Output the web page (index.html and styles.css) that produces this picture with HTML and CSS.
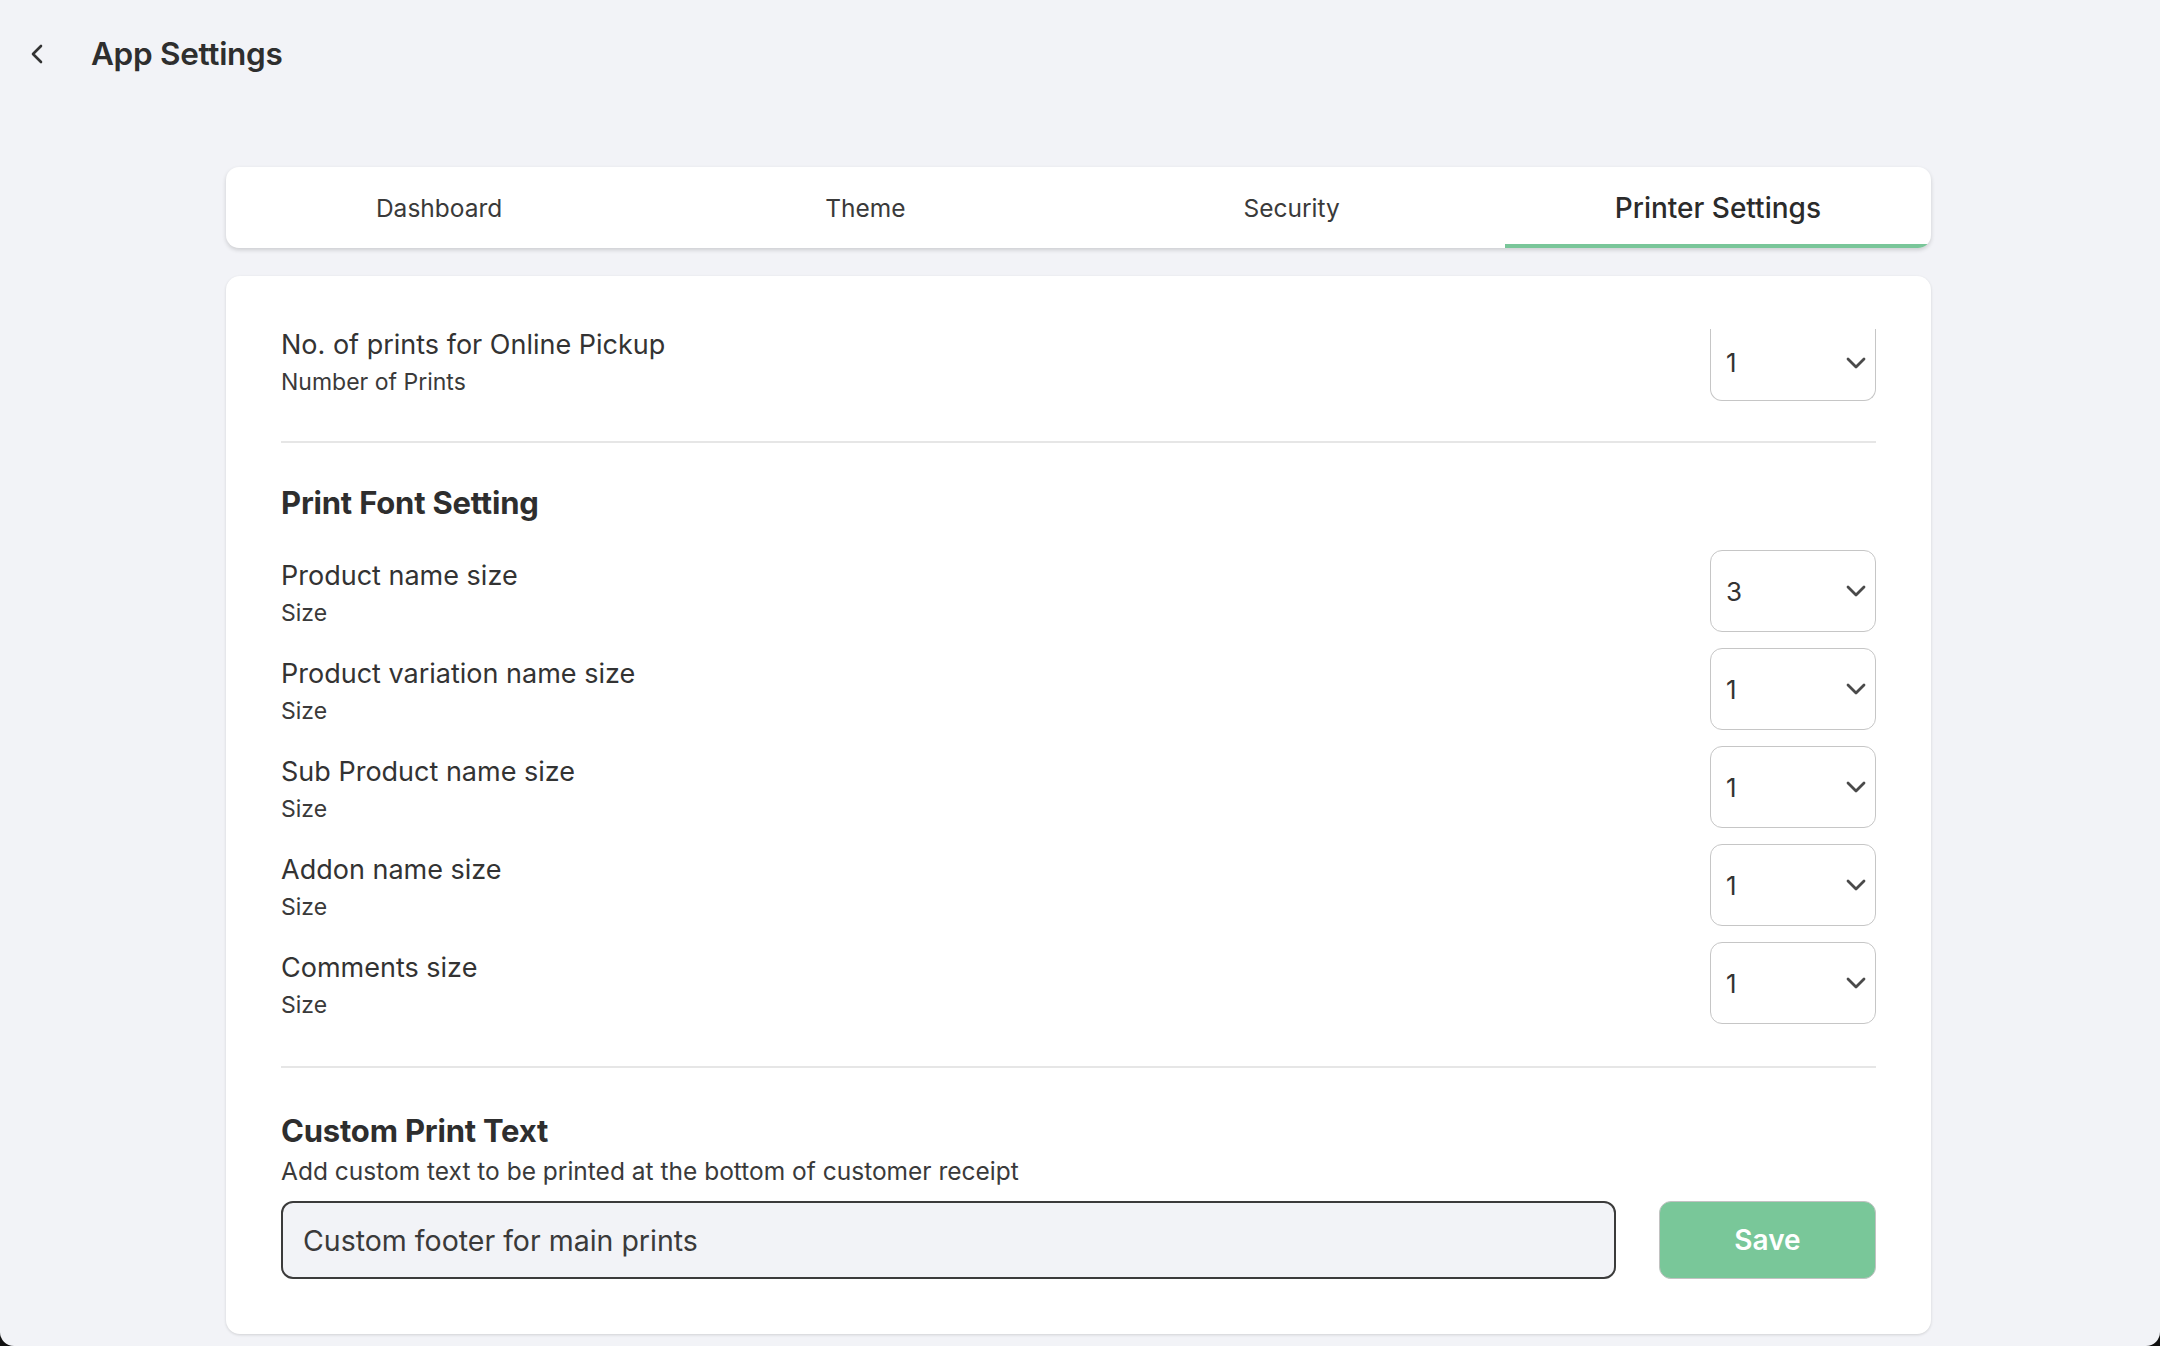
FILE: index.html
```html
<!DOCTYPE html>
<html lang="en">
<head>
<meta charset="utf-8">
<title>App Settings</title>
<link rel="stylesheet" href="styles.css">
</head>
<body>
<header class="topbar">
  <button class="back" aria-label="Back">
    <svg width="14" height="22" viewBox="0 0 14 22"><path d="M11 3 L3 11 L11 19" fill="none" stroke="#333" stroke-width="2.6" stroke-linecap="round" stroke-linejoin="round"/></svg>
  </button>
  <h1 class="title">App Settings</h1>
</header>

<main class="wrap">
  <nav class="tabs">
    <div class="tab">Dashboard</div>
    <div class="tab">Theme</div>
    <div class="tab">Security</div>
    <div class="tab active">Printer Settings</div>
  </nav>

  <section class="card">
    <div class="scroll">
      <div class="scroll-inner">
        <div class="row">
          <div class="label">
            <div class="name">No. of prints for Online Pickup</div>
            <div class="sub">Number of Prints</div>
          </div>
          <div class="select clipped"><span>1</span><svg class="chev" width="20" height="12" viewBox="0 0 20 12"><path d="M2 2 L10 10 L18 2" fill="none" stroke="#4a4a4a" stroke-width="2.8" stroke-linecap="round" stroke-linejoin="round"/></svg></div>
        </div>

        <hr class="divider first">

        <h2 class="heading">Print Font Setting</h2>

        <div class="rows">
          <div class="row">
            <div class="label"><div class="name">Product name size</div><div class="sub">Size</div></div>
            <div class="select"><span>3</span><svg class="chev" width="20" height="12" viewBox="0 0 20 12"><path d="M2 2 L10 10 L18 2" fill="none" stroke="#4a4a4a" stroke-width="2.8" stroke-linecap="round" stroke-linejoin="round"/></svg></div>
          </div>
          <div class="row">
            <div class="label"><div class="name">Product variation name size</div><div class="sub">Size</div></div>
            <div class="select"><span>1</span><svg class="chev" width="20" height="12" viewBox="0 0 20 12"><path d="M2 2 L10 10 L18 2" fill="none" stroke="#4a4a4a" stroke-width="2.8" stroke-linecap="round" stroke-linejoin="round"/></svg></div>
          </div>
          <div class="row">
            <div class="label"><div class="name">Sub Product name size</div><div class="sub">Size</div></div>
            <div class="select"><span>1</span><svg class="chev" width="20" height="12" viewBox="0 0 20 12"><path d="M2 2 L10 10 L18 2" fill="none" stroke="#4a4a4a" stroke-width="2.8" stroke-linecap="round" stroke-linejoin="round"/></svg></div>
          </div>
          <div class="row">
            <div class="label"><div class="name">Addon name size</div><div class="sub">Size</div></div>
            <div class="select"><span>1</span><svg class="chev" width="20" height="12" viewBox="0 0 20 12"><path d="M2 2 L10 10 L18 2" fill="none" stroke="#4a4a4a" stroke-width="2.8" stroke-linecap="round" stroke-linejoin="round"/></svg></div>
          </div>
          <div class="row">
            <div class="label"><div class="name">Comments size</div><div class="sub">Size</div></div>
            <div class="select"><span>1</span><svg class="chev" width="20" height="12" viewBox="0 0 20 12"><path d="M2 2 L10 10 L18 2" fill="none" stroke="#4a4a4a" stroke-width="2.8" stroke-linecap="round" stroke-linejoin="round"/></svg></div>
          </div>
        </div>

        <hr class="divider second">

        <h2 class="heading">Custom Print Text</h2>
        <p class="desc">Add custom text to be printed at the bottom of customer receipt</p>
        <div class="footer-form">
          <div class="input">Custom footer for main prints</div>
          <button class="save">Save</button>
        </div>
      </div>
    </div>
  </section>
</main>

<div class="screen-corners"></div>
</body>
</html>
```

FILE: styles.css
```css
* { box-sizing: border-box; }

html, body {
  margin: 0;
  padding: 0;
  background: #f2f3f7;
  color: #333333;
  font-family: Inter, "Open Sans", "Liberation Sans", sans-serif;
}

body {
  width: 2160px;
  height: 1346px;
  overflow: hidden;
}

.topbar {
  display: flex;
  align-items: center;
  height: 40px;
  margin-top: 34px;
  padding-left: 29px;
}

.back {
  display: flex;
  align-items: center;
  justify-content: center;
  width: 16px;
  height: 24px;
  padding: 0;
  border: 0;
  background: none;
}

.title {
  margin: 0 0 0 46px;
  font-size: 31.5px;
  line-height: 40px;
  font-weight: 600;
  color: #2e2e2e;
  letter-spacing: -0.3px;
}

.wrap {
  width: 1705px;
  margin: 93px 0 0 226px;
}

.tabs {
  display: grid;
  grid-template-columns: repeat(4, 1fr);
  height: 81px;
  background: #ffffff;
  border-radius: 13px;
  box-shadow: 0 2px 4px rgba(0, 0, 0, 0.16);
  overflow: hidden;
}

.tab {
  display: flex;
  align-items: center;
  justify-content: center;
  font-size: 24.5px;
  color: #3a3a3a;
  font-weight: 400;
  border-bottom: 4px solid transparent;
  padding-top: 4px;
}

.tab.active {
  font-size: 28px;
  font-weight: 500;
  color: #2b2b2b;
  border-bottom-color: #79c699;
}

.card {
  margin-top: 28px;
  height: 1058px;
  background: #ffffff;
  border-radius: 14px;
  box-shadow: 0 1px 3px rgba(0, 0, 0, 0.14);
  padding: 53px 55px 0 55px;
}

.scroll {
  overflow: hidden;
  height: 1005px;
}

.scroll-inner {
  margin-top: -10px;
}

.rows {
  display: flex;
  flex-direction: column;
  gap: 16px;
  margin-top: 27px;
}

.row {
  display: flex;
  align-items: center;
  justify-content: space-between;
  height: 82px;
}

.name {
  font-size: 27px;
  line-height: 44px;
  color: #333333;
}

.sub {
  font-size: 23px;
  line-height: 30px;
  color: #3a3a3a;
}

.select {
  position: relative;
  display: flex;
  align-items: center;
  justify-content: space-between;
  width: 166px;
  height: 82px;
  padding: 0 9px 0 15px;
  border: 1.5px solid #c6c6c6;
  border-radius: 12px;
  font-size: 26px;
  color: #333333;
}

.select.clipped {
  border-top: 0;
  border-top-left-radius: 0;
  border-top-right-radius: 0;
  padding-top: 6px;
  height: 82px;
}

.chev { display: block; }

.divider {
  margin: 40px 0 0 0;
  border: 0;
  height: 2px;
  background: #e6e6e6;
}

.divider.second { margin-top: 42px; }

.heading {
  margin: 40px 0 0 0;
  font-size: 31px;
  line-height: 40px;
  font-weight: 700;
  color: #2e2e2e;
  letter-spacing: -0.2px;
}

.divider.second + .heading { margin-top: 43px; }

.desc {
  margin: 5px 0 0 0;
  font-size: 24.5px;
  line-height: 30px;
  color: #3a3a3a;
}

.footer-form {
  display: flex;
  gap: 43px;
  margin-top: 15px;
}

.input {
  flex: 1;
  display: flex;
  align-items: center;
  height: 78px;
  padding-left: 20px;
  background: #f2f3f7;
  border: 2px solid #3b3b3b;
  border-radius: 12px;
  font-size: 28.5px;
  color: #3a3a3a;
}

.save {
  width: 217px;
  height: 78px;
  background: #79c799;
  border: 1.5px solid #c2c2c2;
  border-radius: 12px;
  color: #ffffff;
  font-family: Inter, "Open Sans", "Liberation Sans", sans-serif;
  font-size: 28px;
  font-weight: 600;
}

.screen-corners {
  position: fixed;
  left: 0;
  top: 0;
  width: 2160px;
  height: 1346px;
  border-radius: 0 0 14px 14px;
  box-shadow: 0 0 0 40px #111111;
  pointer-events: none;
}
```
